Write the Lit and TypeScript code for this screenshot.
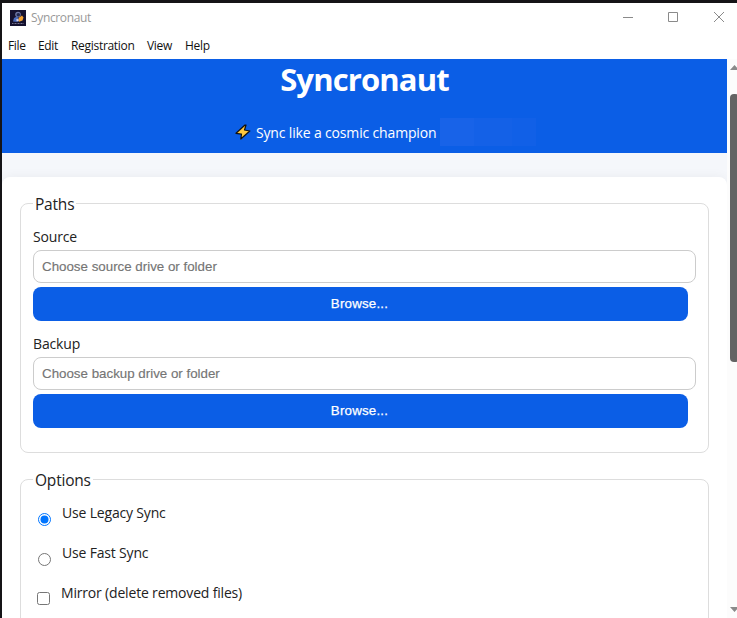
import { LitElement, html, css } from "lit";
import { customElement, property } from "lit/decorators.js";

@customElement("path-field")
class PathField extends LitElement {
  @property() label = "";
  @property() hint = "";
  static styles = css`
    :host { display: block; height: 107px; }
    .label { display: block; height: 26px; line-height: 26px; font-size: 14px; letter-spacing: -0.15px; color: #222; }
    .input {
      display: block; box-sizing: border-box; width: 663px; height: 33px; padding: 0 8px;
      border: 1px solid #ccc; border-radius: 8px; background: #fff; outline: none;
      font: 13.33px "Liberation Sans", Arial, sans-serif;
    }
    .input::placeholder { color: #757575; -webkit-text-stroke: 0.15px #757575; }
    .browse {
      display: block; box-sizing: border-box; width: 655px; height: 34px; margin: 4px 0 0; padding: 0 2px 1px 0;
      border: 0; border-radius: 8px; background: #0b5ee6; color: #fff; letter-spacing: 0.2px;
      font: 13.33px "Liberation Sans", Arial, sans-serif; -webkit-text-stroke: 0.25px #fff;
    }
  `;
  render() {
    return html`<label class="label">${this.label}</label>
      <input class="input" placeholder=${this.hint} />
      <button class="browse">Browse...</button>`;
  }
}

@customElement("app-root")
class AppRoot extends LitElement {
  static styles = css`
    :host {
      display: block; position: relative; box-sizing: border-box; width: 737px; height: 618px; overflow: hidden;
      padding: 3px 0 0 2px; background: #151417; font-family: "Open Sans", "Noto Sans", sans-serif; color: #222;
    }
    .window { height: 615px; background: #fff; display: flex; flex-direction: column; }
    .titlebar { display: flex; align-items: center; height: 30px; padding-left: 8px; flex: none; }
    .appicon { width: 16px; height: 16px; margin-right: 5px; }
    .apptitle { font-size: 12px; letter-spacing: -0.35px; color: #999; flex: 1; line-height: 30px; }
    .controls { width: 115px; height: 30px; }
    .menubar { display: flex; height: 26px; padding-left: 6px; font-size: 12px; line-height: 26px; color: #111; flex: none; }
    .item { white-space: nowrap; letter-spacing: -0.33px; }
    .i0 { width: 30px; } .i1 { width: 33px; } .i2 { width: 76px; } .i3 { width: 38px; }
    .i2 { letter-spacing: -0.3px; }
    .body { display: flex; flex: 1; min-height: 0; }
    .page { width: 725px; background: #f5f7fb; overflow: hidden; }
    .hero { height: 94px; background: #0b5ee6; color: #fff; text-align: center; }
    .hero h1 { margin: 0; height: 59px; line-height: 41px; font-size: 31px; letter-spacing: -0.85px; font-weight: 700; }
    .tag { display: flex; height: 28px; padding-left: 232px; align-items: center; font-size: 14px; white-space: nowrap; }
    .bolt { width: 18px; height: 18px; margin-right: 4px; }
    .tagtext { width: 184px; text-align: left; letter-spacing: -0.16px; }
    .patch { width: 96px; height: 28px; background: linear-gradient(90deg, #1863e8 0 35%, #1461e7 35% 75%, #1160e7 75%); }
    .card {
      margin-top: 24px; height: 470px; box-sizing: border-box; padding: 16px 18px; background: #fff;
      border-radius: 8px; box-shadow: 0 0 12px rgba(0, 0, 0, 0.05);
    }
    fieldset { margin: 0 0 16px; padding: 0 12px; border: 1px solid #ddd; border-radius: 8px; width: 689px; box-sizing: border-box; }
    legend { height: 21px; line-height: 23px; padding: 0 2px; font-size: 15.5px; letter-spacing: -0.2px; }
    .paths { height: 260px; padding-top: 10px; }
    .options { height: 220px; padding-top: 13px; }
    .row { display: flex; height: 40px; }
    .mark { flex: none; width: 13px; height: 13px; margin: 10px 11px 0 5px; }
    .check { margin: 9px 11px 0 4px; }
    .rowlabel { font-size: 14px; line-height: 20px; letter-spacing: -0.18px; white-space: nowrap; }
    .scroll { width: 10px; height: 559px; background: #fcfcfc; }
  `;
  render() {
    return html`
      <div class="window">
        <div class="titlebar">
          <svg class="appicon" viewBox="0 0 16 16">
            <rect width="16" height="16" fill="#15122f" />
            <circle cx="8" cy="4.6" r="2.800" fill="#7078a4" /><circle cx="8.3" cy="4.700" r="1.800" fill="#202850" />
            <path d="M3 11.500l1-3.500 3-1.500 1.500 2-1 3.500z" fill="#4c6cbc" />
            <path d="M8.500 8l3.500-2.500 1.500 2-1 3-3.500 1.200z" fill="#f3a12f" />
            <path d="M6.500 9l2.500.5-.5 2-2-.5z" fill="#e0d8e8" />
            <path d="M2 13.500h12" stroke="#777391" stroke-dasharray="1 .5" />
          </svg>
          <span class="apptitle">Syncronaut</span>
          <svg class="controls" viewBox="0 0 115 30" fill="none" stroke="#8a8a8a">
            <path d="M1 14.500h10M46.500 9.500h9v9h-9zM92 9l10 10M102 9l-10 10" />
          </svg>
        </div>
        <nav class="menubar">
          ${["File", "Edit", "Registration", "View", "Help"].map((t, i) => html`<span class="item i${i}">${t}</span>`)}
        </nav>
        <div class="body">
          <div class="page">
            <header class="hero">
              <h1>Syncronaut</h1>
              <div class="tag">
                <svg class="bolt" viewBox="0 0 18 18">
                  <path d="M11 2L2 10.300l5.500.9L6.800 16 15.800 8l-5.300-1L12 2z" fill="#ffc83d" stroke="#111" stroke-width="1.200" stroke-linejoin="round" />
                </svg>
                <span class="tagtext">Sync like a cosmic champion</span>
                <span class="patch"></span>
              </div>
            </header>
            <main class="card">
              <fieldset class="paths">
                <legend>Paths</legend>
                <path-field label="Source" hint="Choose source drive or folder"></path-field>
                <path-field label="Backup" hint="Choose backup drive or folder"></path-field>
              </fieldset>
              <fieldset class="options">
                <legend>Options</legend>
                <div class="row">
                  <svg class="mark" viewBox="0 0 13 13"><circle cx="6.5" cy="6.5" r="6" fill="#fff" stroke="#0075ff" /><circle cx="6.5" cy="6.5" r="4" fill="#0075ff" /></svg>
                  <span class="rowlabel">Use Legacy Sync</span>
                </div>
                <div class="row">
                  <svg class="mark" viewBox="0 0 13 13"><circle cx="6.5" cy="6.5" r="6" fill="#fff" stroke="#767676" /></svg>
                  <span class="rowlabel">Use Fast Sync</span>
                </div>
                <div class="row">
                  <svg class="mark check" viewBox="0 0 13 13"><rect x=".5" y=".5" width="12" height="12" rx="2" fill="#fff" stroke="#767676" /></svg>
                  <span class="rowlabel">Mirror (delete removed files)</span>
                </div>
              </fieldset>
            </main>
          </div>
          <svg class="scroll" viewBox="0 0 10 559">
            <path d="M3 11l4.500-5 4.500 5zM3 548l4.500 5 4.500-5z" fill="#8a8a8a" />
            <rect x="3" y="35" width="9" height="268" rx="4" fill="#636363" />
          </svg>
        </div>
      </div>`;
  }
}
